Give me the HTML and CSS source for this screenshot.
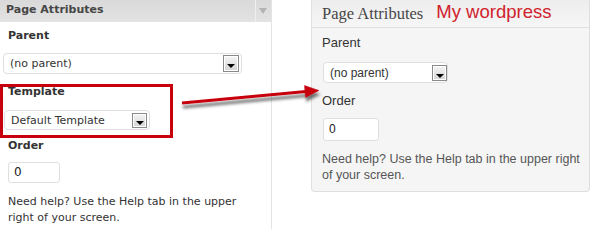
FILE: index.html
```html
<!DOCTYPE html>
<html lang="en">
<head>
  <meta charset="UTF-8" />
  <title>Page Attributes</title>
  <link rel="stylesheet" href="styles.css">
</head>
<body>

<div class="page">

  <!-- old admin box -->
  <div class="box old">
    <div class="box-head">
      <h3>Page Attributes</h3>
      <span class="toggle"></span>
    </div>
    <p class="label first">Parent</p>
    <div class="select wide"><span>(no parent)</span><i class="drop"></i></div>
    <div class="highlight">
      <p class="label tpl">Template</p>
      <div class="select mid"><span>Default Template</span><i class="drop"></i></div>
    </div>
    <p class="label order">Order</p>
    <div class="input">0</div>
    <p class="help">Need help? Use the Help tab in the upper right of your screen.</p>
  </div>

  <!-- new admin box -->
  <div class="box new">
    <div class="box-head">
      <h3>Page Attributes</h3>
      <span class="note">My wordpress</span>
    </div>
    <p class="label first">Parent</p>
    <div class="select"><span>(no parent)</span><i class="drop"></i></div>
    <p class="label order">Order</p>
    <div class="input">0</div>
    <p class="help">Need help? Use the Help tab in the upper right of your screen.</p>
  </div>

  <svg class="arrow" width="592" height="229" viewBox="0 0 592 229">
    <defs>
      <filter id="shadow" x="-10%" y="-50%" width="120%" height="250%">
        <feDropShadow dx="1" dy="4" stdDeviation="1.4" flood-color="#444" flood-opacity="0.75"/>
      </filter>
    </defs>
    <g filter="url(#shadow)" fill="#c8000e" stroke="#c8000e">
      <line x1="182" y1="103" x2="306" y2="91.6" stroke-width="3"/>
      <polygon points="319,90.5 304.5,85.6 305.5,97.4" stroke-width="0.5"/>
    </g>
  </svg>

</div>

</body>
</html>
```

FILE: styles.css
```css
body {
  margin: 0;
  background: #fff;
}
p {
  margin: 0;
}
h3 {
  margin: 0;
  font-weight: normal;
}
.page {
  position: relative;
  display: flex;
  align-items: flex-start;
  height: 229px;
  overflow: hidden;
}
.arrow {
  position: absolute;
  left: 0;
  top: 0;
  pointer-events: none;
}

/* shared bits */
.select {
  box-sizing: border-box;
  display: flex;
  align-items: center;
  background: #fff;
  border: 1px solid #dfdfdf;
  border-radius: 4px;
}
.drop {
  box-sizing: border-box;
  position: relative;
  margin-left: auto;
  width: 16px;
  height: 17px;
  border: 1px solid #8a8a8a;
  background: linear-gradient(#f5f5f5, #d4d4d4);
  box-shadow: inset 0 0 0 1px #fff;
}
.drop::after {
  content: "";
  position: absolute;
  left: 50%;
  top: 8px;
  margin-left: -4px;
  border-left: 4px solid transparent;
  border-right: 4px solid transparent;
  border-top: 4px solid #000;
}
.input {
  box-sizing: border-box;
  background: #fff;
  border: 1px solid #dfdfdf;
  border-radius: 3px;
  color: #222;
}

/* old box */
.old {
  width: 271px;
  height: 229px;
  border-right: 1px solid #e4e4e4;
  font-family: "DejaVu Sans", Verdana, sans-serif;
  font-size: 11px;
  color: #333;
}
.old .box-head {
  display: flex;
  height: 22px;
  background: linear-gradient(#d9d9d9, #e3e3e3);
}
.old h3 {
  padding-left: 6px;
  line-height: 20px;
  font-size: 11px;
  font-weight: bold;
  color: #464646;
}
.toggle {
  position: relative;
  margin-left: auto;
  width: 15px;
  border-left: 1px solid #efefef;
}
.toggle::after {
  content: "";
  position: absolute;
  left: 3px;
  top: 8px;
  border-left: 4px solid transparent;
  border-right: 4px solid transparent;
  border-top: 6px solid #b3b3b3;
}
.old .label {
  margin-left: 8px;
  line-height: 14px;
  font-weight: bold;
  color: #333;
}
.old .label.first {
  margin-top: 7px;
}
.old .select {
  height: 21px;
  padding-left: 6px;
  padding-right: 2px;
}
.old .select.wide {
  margin: 10px 0 0 3px;
  width: 239px;
}
.highlight {
  box-sizing: border-box;
  margin-top: 10px;
  width: 173px;
  border: 3px solid #c8000e;
  padding-bottom: 5px;
}
.old .label.tpl {
  margin: -2px 0 0 5px;
  line-height: 13px;
}
.old .select.mid {
  margin: 12px 0 0 1px;
  width: 146px;
  height: 20px;
}
.old .select.mid .drop {
  width: 15px;
  height: 15px;
}
.old .select.mid .drop::after {
  top: 7px;
}
.old .label.order {
  margin-top: 1px;
}
.old .input {
  margin: 9px 0 0 8px;
  width: 52px;
  height: 21px;
  padding-left: 5px;
  line-height: 19px;
  font-size: 12px;
}
.old .help {
  margin: 11px 0 0 8px;
  width: 240px;
  line-height: 16px;
}

/* new box */
.new {
  box-sizing: border-box;
  margin-left: 39px;
  width: 279px;
  background: #f5f5f5;
  border: 1px solid #dfdfdf;
  border-top: 0;
  border-radius: 0 0 4px 4px;
  padding-bottom: 8px;
  font-family: "Liberation Sans", Arial, sans-serif;
  color: #333;
}
.new .box-head {
  display: flex;
  align-items: flex-start;
  height: 27px;
  padding-left: 10px;
  background: linear-gradient(#ededed, #f6f6f6);
  border-bottom: 1px solid #e0e0e0;
}
.new h3 {
  font-family: "Liberation Serif", Georgia, serif;
  font-size: 16.5px;
  line-height: 27px;
  color: #464646;
}
.note {
  margin-left: 13px;
  font-size: 18.5px;
  line-height: 23px;
  color: #d0222c;
}
.new .label {
  margin-left: 10px;
  font-size: 13px;
  line-height: 16px;
}
.new .label.first {
  margin-top: 7px;
}
.new .select {
  margin: 11px 0 0 11px;
  width: 125px;
  height: 21px;
  padding-left: 6px;
  padding-right: 0;
  font-size: 12px;
}
.new .select .drop {
  width: 15px;
  height: 16px;
}
.new .label.order {
  margin-top: 10px;
}
.new .input {
  margin: 9px 0 0 11px;
  width: 56px;
  height: 23px;
  padding-left: 5px;
  line-height: 21px;
  font-size: 12px;
}
.new .help {
  margin: 10px 0 0 10px;
  width: 263px;
  font-size: 12.5px;
  line-height: 16px;
  color: #555;
}
```
